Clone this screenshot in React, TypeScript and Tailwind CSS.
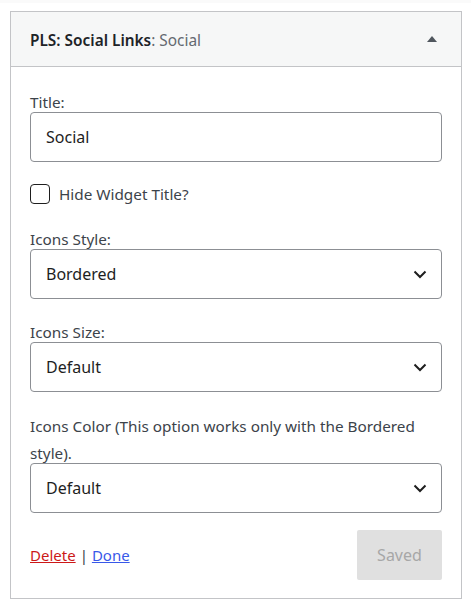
import React from "react";

function Chevron() {
  return (
    <svg width="14" height="9" viewBox="0 0 14 9" className="shrink-0">
      <polyline points="1.5,1.5 7,7 12.5,1.5" fill="none" stroke="#1e1e1e" strokeWidth="2" />
    </svg>
  );
}

function SelectBox({ value }: { value: string }) {
  return (
    <div className="flex h-[50px] items-center justify-between rounded-[4px] border border-[#8c8f94] bg-white pl-[15px] pr-[14px]">
      <span className="text-[16px] text-[#1e1e1e]">{value}</span>
      <Chevron />
    </div>
  );
}

export default function App() {
  return (
    <div className="min-h-[609px] bg-white font-['Noto_Sans',sans-serif]">
      <div className="h-[3px] bg-[#fafafa]" />
      <div className="mx-[10px] mt-[8px] w-[452px] border border-[#c3c4c7] bg-white">
        {/* widget header */}
        <div className="flex h-[55px] items-center justify-between border-b border-[#c3c4c7] bg-[#f6f7f7] pl-[19px] pr-[24px]">
          <h3 className="pt-[3px] text-[15.4px] font-semibold text-[#1d2327]">
            PLS: Social Links<span className="font-normal text-[#646970]">: Social</span>
          </h3>
          <svg width="10" height="6" viewBox="0 0 10 6">
            <polygon points="5,0 10,6 0,6" fill="#50575e" />
          </svg>
        </div>

        {/* widget form */}
        <div className="px-[19px] pb-[18px] pt-[22px] text-[15.3px] text-[#3c434a]">
          <label className="-mb-[4px] block leading-[27px]">Title:</label>
          <div className="flex h-[50px] items-center rounded-[4px] border border-[#8c8f94] bg-white px-[15px] text-[16px] text-[#1e1e1e]">
            Social
          </div>

          <div className="mt-[22px] flex items-center gap-[9px]">
            <span className="h-[20px] w-[20px] rounded-[4px] border border-[#1e1e1e] bg-white" />
            <span className="leading-[20px]">Hide Widget Title?</span>
          </div>

          <label className="-mb-[4px] mt-[22px] block leading-[27px]">Icons Style:</label>
          <SelectBox value="Bordered" />

          <label className="-mb-[4px] mt-[20px] block leading-[27px]">Icons Size:</label>
          <SelectBox value="Default" />

          <label className="-mb-[4px] mt-[21px] block leading-[27px]">
            Icons Color (This option works only with the Bordered style).
          </label>
          <SelectBox value="Default" />

          <div className="mt-[17px] flex items-center justify-between">
            <div className="flex items-center gap-[4px] text-[15px] text-[#3c434a]">
              <a className="text-[#cc1818] underline">Delete</a>
              <span>|</span>
              <a className="text-[#3858e9] underline">Done</a>
            </div>
            <button className="h-[50px] w-[85px] rounded-[2px] bg-[#e0e0e0] text-[16px] text-[#a7a7a7]">
              Saved
            </button>
          </div>
        </div>
      </div>
    </div>
  );
}
